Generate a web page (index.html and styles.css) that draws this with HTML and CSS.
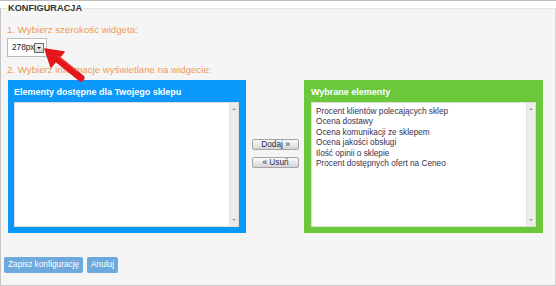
FILE: index.html
```html
<!doctype html>
<html lang="pl">
<head>
	<meta charset="utf-8">
	<meta name="viewport" content="width=device-width, initial-scale=1.0">
	<title>Konfiguracja widgetu</title>
	<link rel="stylesheet" href="styles.css">
</head>
<body>
	<div class="topline"></div>
	<fieldset class="config">
		<legend>KONFIGURACJA</legend>
		<p class="step">1. Wybierz szerokośc widgeta:</p>
		<div class="size-select">
			<span class="size-value">278px</span>
			<span class="size-drop"></span>
		</div>
		<p class="step step-2">2. Wybierz informacje wyświetlane na widgecie:</p>

		<div class="lists">
			<div class="panel panel-blue">
				<h3 class="panel-title">Elementy dostępne dla Twojego sklepu</h3>
				<div class="listbox">
					<ul class="listbox-items"></ul>
					<div class="listbox-scroll"><span class="scroll-up"></span><span class="scroll-down"></span></div>
				</div>
			</div>

			<div class="moves">
				<button type="button" class="move-btn">Dodaj »</button>
				<button type="button" class="move-btn">« Usuń</button>
			</div>

			<div class="panel panel-green">
				<h3 class="panel-title">Wybrane elementy</h3>
				<div class="listbox">
					<ul class="listbox-items">
						<li>Procent klientów polecających sklep</li>
						<li>Ocena dostawy</li>
						<li>Ocena komunikacji ze sklepem</li>
						<li>Ocena jakości obsługi</li>
						<li>Ilość opinii o sklepie</li>
						<li>Procent dostępnych ofert na Ceneo</li>
					</ul>
					<div class="listbox-scroll"><span class="scroll-up"></span><span class="scroll-down"></span></div>
				</div>
			</div>
		</div>

		<div class="actions">
			<button type="button" class="btn">Zapisz konfigurację</button>
			<button type="button" class="btn">Anuluj</button>
		</div>
	</fieldset>

	<!-- annotation arrow pointing at the width dropdown -->
	<svg class="hint-arrow" width="100" height="100" viewBox="0 0 100 100">
		<line x1="56" y1="58" x2="81" y2="78" stroke="#e3161c" stroke-width="7" stroke-linecap="round"/>
		<polygon points="45,49 64,52 51,67" fill="#e3161c" stroke="#e3161c" stroke-width="1.5" stroke-linejoin="round"/>
		<line x1="58" y1="56" x2="78" y2="72" stroke="#ff5a5a" stroke-width="1.2" stroke-linecap="round" opacity=".6"/>
	</svg>
</body>
</html>
```

FILE: styles.css
```css
* {
	box-sizing: border-box;
}
body {
	margin: 0;
	background: #fff;
	font-family: "Liberation Sans", Arial, sans-serif;
	position: relative;
}

.topline {
	border-top: 1px solid #bdbdbd;
}

.config {
	margin: 0;
	padding: 0 6px 12px;
	min-width: 0;
	background: #f5f5f5;
	border: 1px solid #c4c4c4;
	border-top-color: #e4e4e4;
	border-right-color: #d4d4d4;
}
.config legend {
	padding: 0 1px;
	font-size: 9.2px;
	font-weight: 700;
	line-height: 14px;
	color: #333;
}

.step {
	margin: 9px 0 0;
	font-size: 9.7px;
	line-height: 12px;
	color: #f39a52;
}
.step-2 {
	margin-top: 7px;
}

.size-select {
	display: flex;
	align-items: center;
	width: 40px;
	height: 19px;
	margin-top: 2px;
	padding: 0 2px 0 4px;
	background: #fff;
	border: 1px solid #bcbcbc;
	font-size: 8.25px;
	color: #222;
}
.size-value {
	flex: 1;
}
.size-drop {
	position: relative;
	width: 10px;
	height: 10px;
	background: linear-gradient(#f4f4f4, #cfcfcf);
	border: 1px solid #6a6a6a;
}
.size-drop::after {
	content: "";
	position: absolute;
	left: 2px;
	top: 3px;
	border-left: 2px solid transparent;
	border-right: 2px solid transparent;
	border-top: 2px solid #111;
}

.lists {
	display: flex;
	margin-top: 4px;
	padding-left: 1px;
}
.panel {
	width: 238px;
	height: 153px;
	padding: 0 7px 6px 6px;
	display: flex;
	flex-direction: column;
}
.panel-blue {
	background: #0a99fb;
}
.panel-green {
	width: 239px;
	padding-left: 7px;
	background: #6cc83b;
}
.panel-title {
	margin: 0;
	height: 22px;
	padding-top: 3px;
	font-size: 9px;
	font-weight: 700;
	line-height: 19px;
	color: #fff;
}

.listbox {
	flex: 1;
	display: flex;
	background: #fff;
	border: 1px solid #dcdcdc;
}
.listbox-items {
	flex: 1;
	margin: 0;
	padding: 3.5px 4px;
	list-style: none;
	font-size: 8.25px;
	line-height: 10.5px;
	color: #3a2f4e;
}
.listbox-scroll {
	position: relative;
	width: 9px;
	background: #ececec;
	border-left: 1px solid #e2e2e2;
}
.scroll-up,
.scroll-down {
	position: absolute;
	left: 2px;
	border-left: 2px solid transparent;
	border-right: 2px solid transparent;
}
.scroll-up {
	top: 5px;
	border-bottom: 2px solid #9a9a9a;
}
.scroll-down {
	bottom: 5px;
	border-top: 2px solid #9a9a9a;
}

.moves {
	display: flex;
	flex-direction: column;
	gap: 7px;
	width: 47px;
	margin: 0 5px 0 6px;
	padding-top: 59px;
}
.move-btn {
	height: 11px;
	padding: 0;
	font-family: inherit;
	font-size: 8.25px;
	line-height: 9px;
	color: #262650;
	background: linear-gradient(#fbfbfb, #d4d4d4);
	border: 1px solid #a4a4a4;
	border-radius: 2px;
}

.actions {
	display: flex;
	gap: 4px;
	margin: 24px 0 0 -3px;
}
.btn {
	height: 16px;
	padding: 0 4px;
	font-family: inherit;
	font-size: 8.25px;
	line-height: 16px;
	color: #fff;
	background: #6ea9de;
	border: 0;
	border-radius: 2px;
}

.hint-arrow {
	position: absolute;
	left: 0;
	top: 0;
}
```
